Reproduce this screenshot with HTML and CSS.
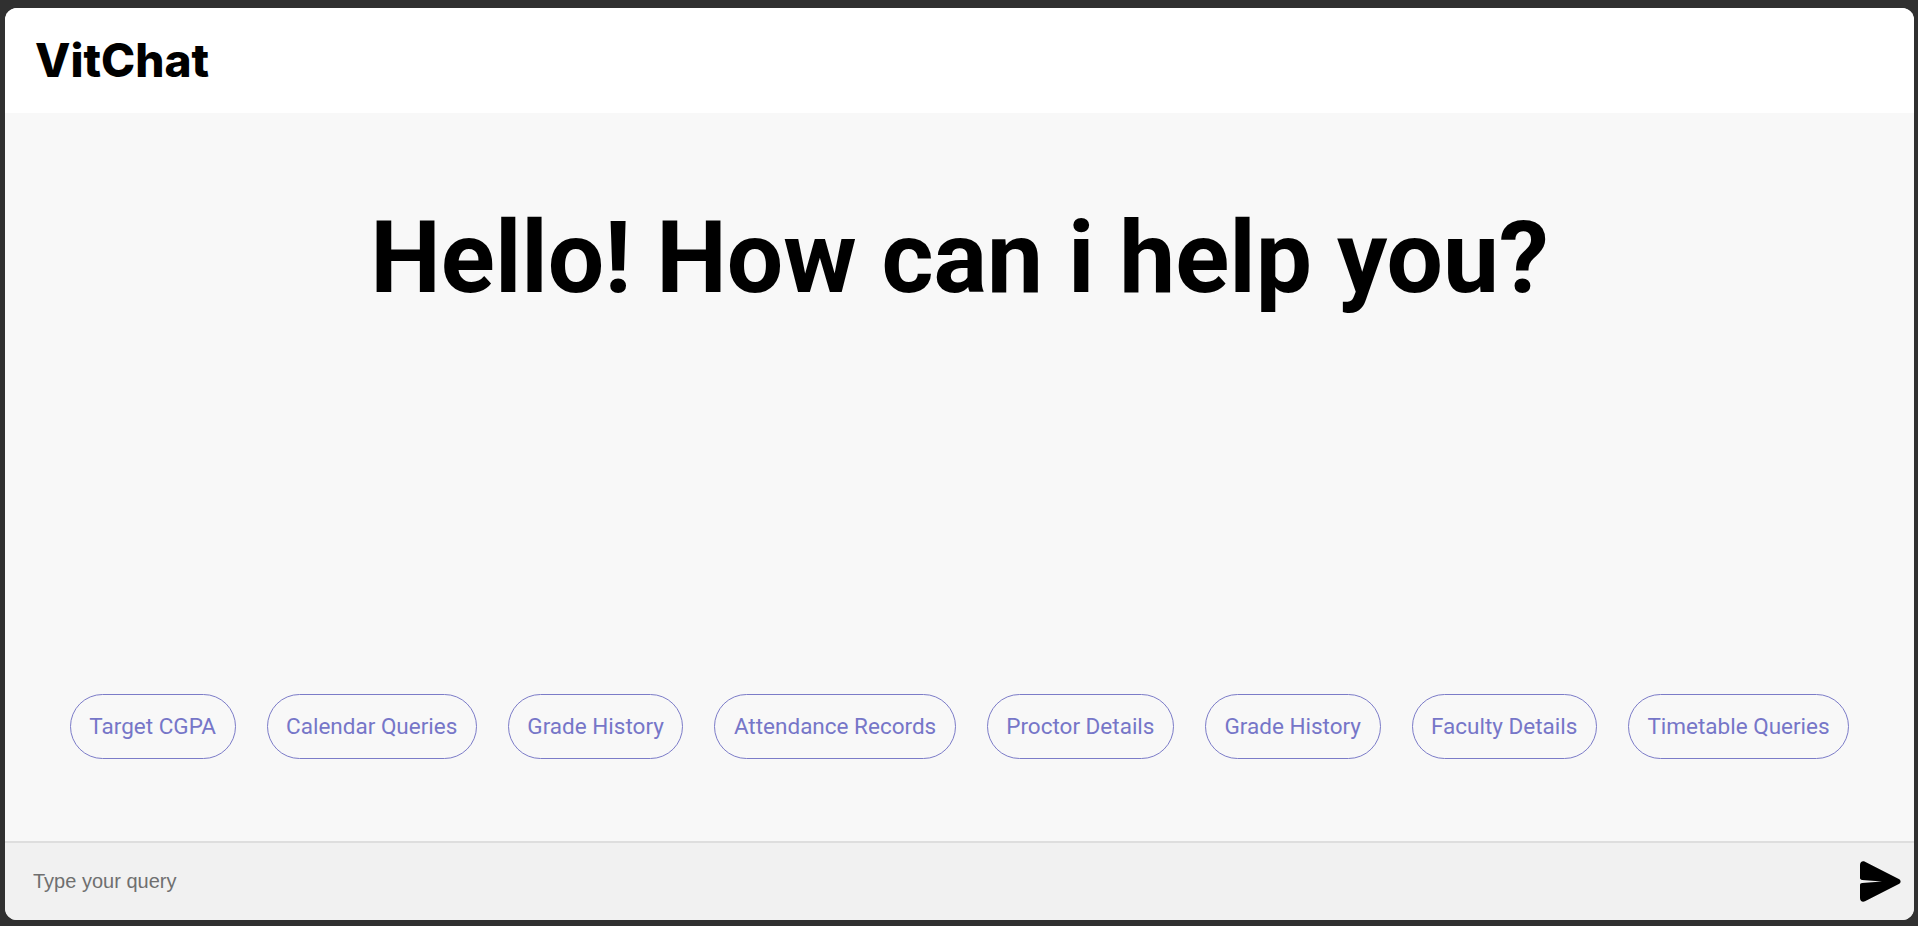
FILE: index.html
```html
<!DOCTYPE html>
<html lang="en">
<head>
<meta charset="utf-8">
<title>VitChat</title>
<link rel="stylesheet" href="styles.css">
</head>
<body>
<div class="app">
  <header class="topbar">
    <h1 class="brand">VitChat</h1>
  </header>
  <main class="main">
    <h2 class="greeting">Hello! How can i help you?</h2>
    <div class="chips">
      <button class="chip">Target CGPA</button>
      <button class="chip">Calendar Queries</button>
      <button class="chip">Grade History</button>
      <button class="chip">Attendance Records</button>
      <button class="chip">Proctor Details</button>
      <button class="chip">Grade History</button>
      <button class="chip">Faculty Details</button>
      <button class="chip">Timetable Queries</button>
    </div>
  </main>
  <footer class="composer">
    <input class="query" type="text" placeholder="Type your query">
    <button class="send" aria-label="Send">
      <svg viewBox="0 0 41 41" width="41" height="41"><path fill="#000" d="M0 4 C0 1 2.5 -0.5 5 0.8 L39.3 18.2 C41 19.2 41 21.8 39.3 22.8 L5 40.2 C2.5 41.5 0 40 0 37 V24 C0 22.8 0.8 22.2 2.2 22 L22 20.5 L2.2 19 C0.8 18.8 0 18.2 0 17 Z"/></svg>
    </button>
  </footer>
</div>
</body>
</html>
```

FILE: styles.css
```css
html, body {
  height: 100%;
}
body {
  margin: 0;
  background: #303030;
  padding: 8px 4px 6px 5px;
  box-sizing: border-box;
}
.app {
  height: 100%;
  display: flex;
  flex-direction: column;
  border-radius: 12px;
  overflow: hidden;
  background: #f8f8f8;
}
.topbar {
  background: #fff;
  padding: 24px 30px 25px;
}
.brand {
  margin: 0;
  font-family: Inter, "Noto Sans", sans-serif;
  font-weight: 800;
  font-size: 46px;
  color: #000;
}
.main {
  flex: 1;
  display: flex;
  flex-direction: column;
  align-items: center;
  padding: 86px 0 82px;
}
.greeting {
  margin: 0;
  font-family: Roboto, "Liberation Sans", sans-serif;
  font-weight: 700;
  font-size: 100px;
  color: #000;
}
.chips {
  margin-top: auto;
  display: flex;
  gap: 31px;
  justify-content: center;
}
.chip {
  font-family: Roboto, "Liberation Sans", sans-serif;
  font-size: 22.5px;
  color: #7676c8;
  background: transparent;
  border: 1px solid #7c7cc8;
  border-radius: 34px;
  padding: 18px 18.5px;
  line-height: 27px;
  cursor: pointer;
}
.composer {
  display: flex;
  align-items: center;
  background: #f1f1f1;
  border-top: 2px solid #dedede;
  height: 77px;
  padding: 0 13px 0 28px;
}
.query {
  flex: 1;
  border: none;
  background: transparent;
  font-family: "Liberation Sans", Arial, sans-serif;
  font-size: 20px;
  color: #333;
  outline: none;
  padding: 0;
}
.query::placeholder {
  color: #6f6f6f;
}
.send {
  border: none;
  background: transparent;
  padding: 0;
  display: flex;
  cursor: pointer;
}
```
